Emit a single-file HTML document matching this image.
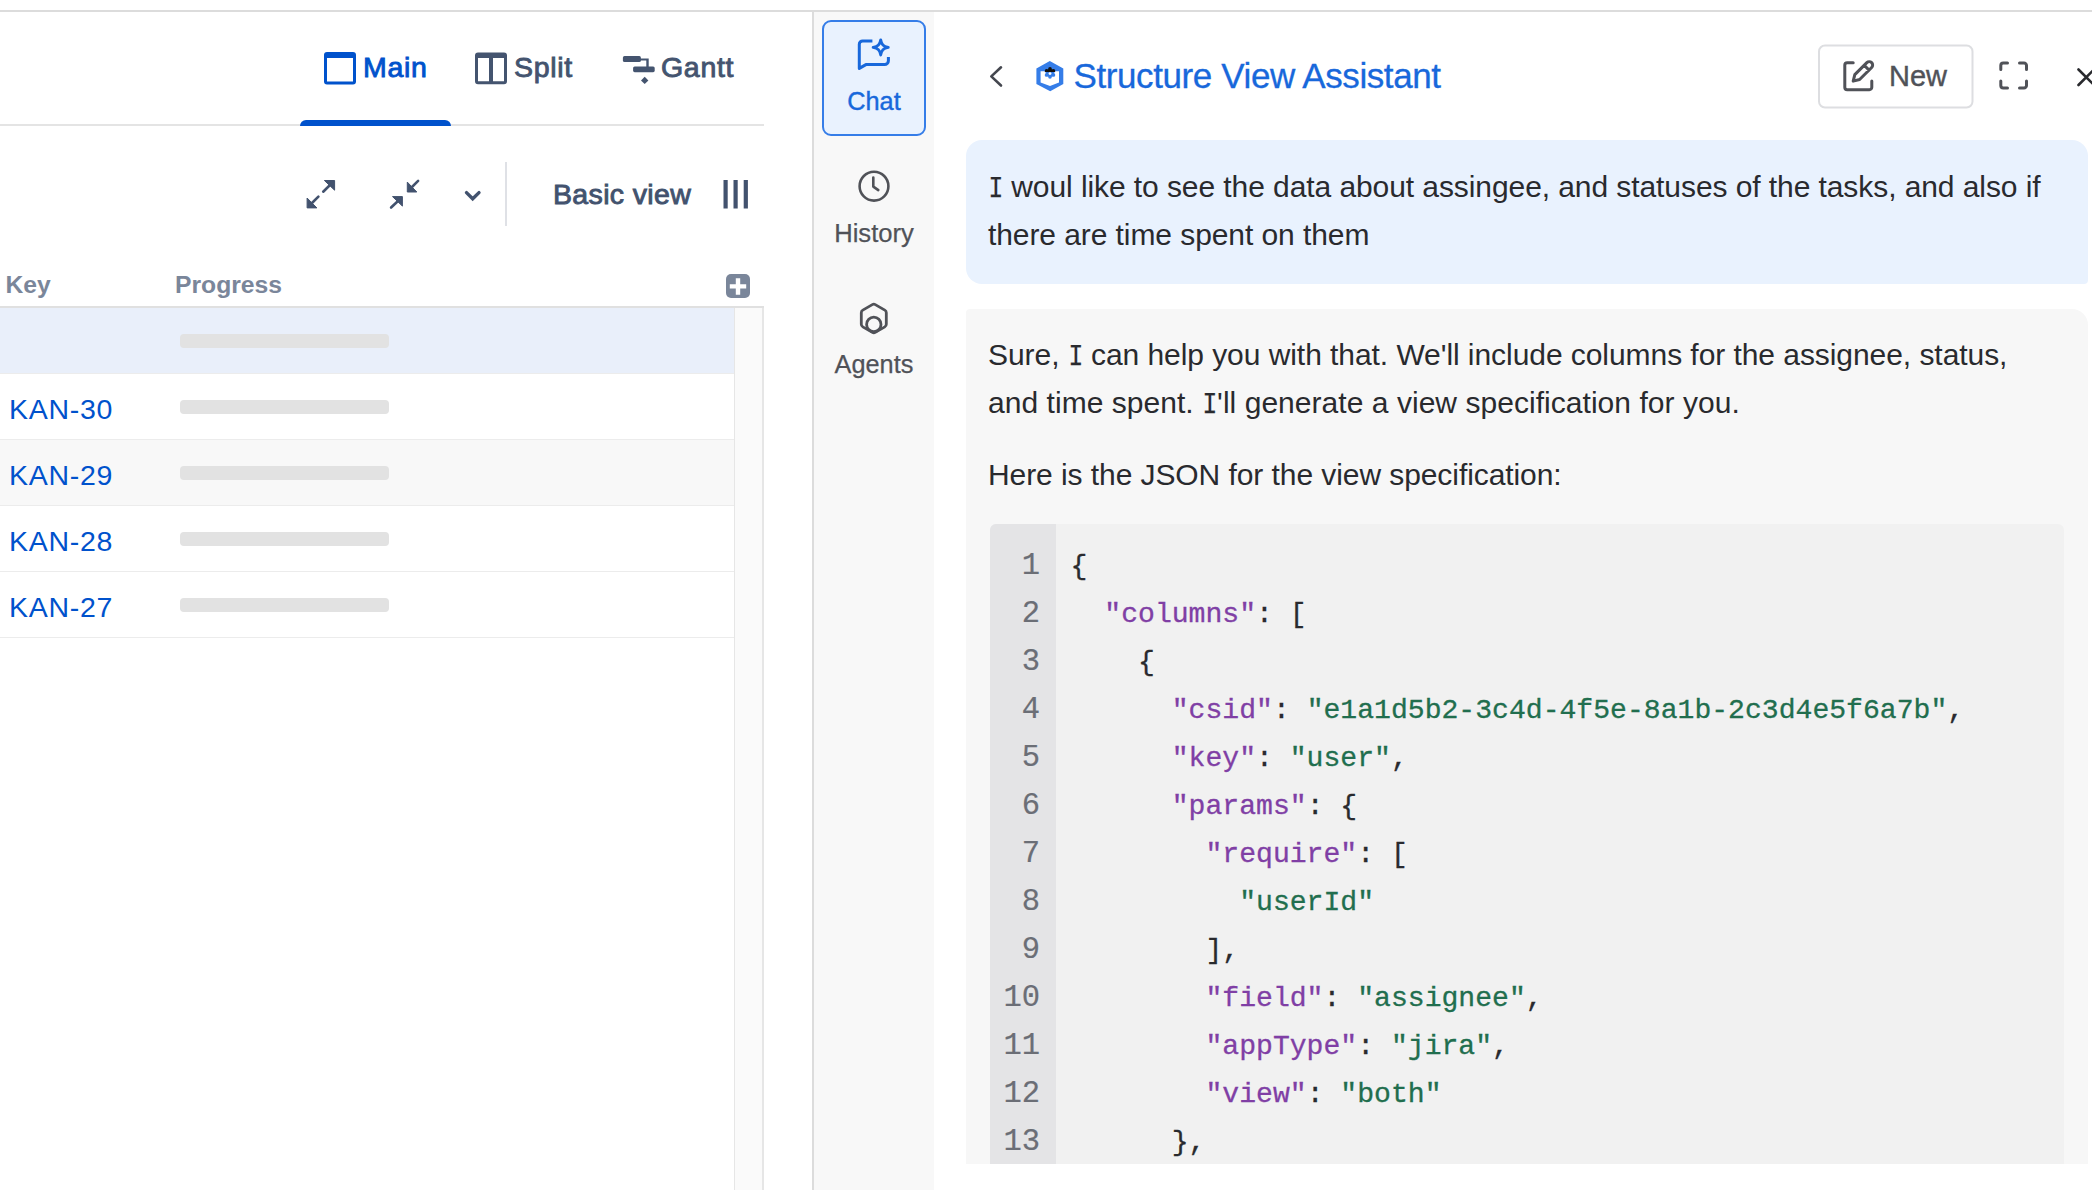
<!DOCTYPE html>
<html><head><meta charset="utf-8">
<style>
*{box-sizing:border-box;margin:0;padding:0}
html,body{width:2092px;height:1190px;overflow:hidden;background:#fff}
body{position:relative;font-family:"Liberation Sans",sans-serif;color:#292a2e}
.a{position:absolute;white-space:pre}
svg{position:absolute;overflow:visible}
.t28{font-size:28.5px;line-height:28px;letter-spacing:0.7px}
.k{color:#803fa5}.s{color:#216e4e}
.ct{font-size:30px;line-height:48px;color:#292a2e}
.I{display:inline-block;width:15px;letter-spacing:0}.I span{display:inline-block;-webkit-text-stroke:0.25px currentColor;font-family:"Liberation Mono",monospace;transform:translateX(0.6px) scaleX(0.82);transform-origin:0 0}
.med{-webkit-text-stroke:0.9px currentColor}
</style></head><body>
<!-- top border -->
<div class="a" style="left:0;top:10px;width:2092px;height:2px;background:#dcdcdc"></div>

<!-- ============ LEFT PANEL ============ -->
<!-- tabs -->
<svg style="left:0;top:0" width="800" height="130">
  <path fill="#0052cc" fill-rule="evenodd" d="M327 52h26a3 3 0 0 1 3 3v26.5a3 3 0 0 1-3 3h-26a3 3 0 0 1-3-3V55a3 3 0 0 1 3-3zM327 58v23.5h26V58z"/>
  <path fill="#44546f" fill-rule="evenodd" d="M478 52.4h26a3 3 0 0 1 3 3v25.8a3 3 0 0 1-3 3h-26a3 3 0 0 1-3-3V55.4a3 3 0 0 1 3-3zM478 58v23.2h11V58zM493 58v23.2h11V58z"/>
  <g fill="#44546f">
    <rect x="622.9" y="56.1" width="18" height="6" rx="1.6"/>
    <rect x="633.1" y="66.4" width="21.6" height="5.8" rx="1.6"/>
    <path d="M640 58.4h8.7v8.6h-2.4v-6.6H640z"/>
    <path d="M644.7 76.7l3.7 3.7-3.7 3.7-3.7-3.7z"/>
  </g>
  
</svg>
<div class="a t28 med" style="left:363px;top:53px;color:#0052cc">Main</div>
<div class="a t28 med" style="left:514px;top:53.3px;color:#44546f">Split</div>
<div class="a t28 med" style="left:661px;top:53.3px;color:#44546f">Gantt</div>
<div class="a" style="left:0;top:124px;width:764px;height:2px;background:#e4e4e4"></div>
<div class="a" style="left:300px;top:120px;width:151px;height:6px;border-radius:6px 6px 0 0;background:#0052cc"></div>

<!-- toolbar -->
<svg style="left:0;top:0" width="800" height="240">
  <g fill="#42526e" stroke="#42526e" stroke-linejoin="round">
    <path stroke-width="1" d="M324.4 180.5H334.6V190.2Z"/>
    <path stroke-width="1" d="M307.1 198V207.9H316.9Z"/>
    <path stroke-width="1" d="M407.3 182.1V192H416.8Z"/>
    <path stroke-width="1" d="M392.5 196.6H402.4V206.1Z"/>
  </g>
  <g stroke="#42526e" stroke-width="2.6" stroke-linecap="round" fill="none">
    <path d="M329 186L323.2 191.7"/>
    <path d="M312 203L318.4 196.6"/>
    <path d="M411.5 187.5L418.1 180.9"/>
    <path d="M397.5 201.5L391.1 207.5"/>
    <path stroke-width="3.4" d="M466.5 192.6L472.7 198.8L479 192.6"/>
  </g>
  <rect x="505" y="162" width="2" height="64" fill="#dfe1e6"/>
  <g fill="#42526e">
    <rect x="723.5" y="180" width="4.2" height="28.5"/>
    <rect x="733.5" y="180" width="4.2" height="28.5"/>
    <rect x="743.7" y="180" width="4.2" height="28.5"/>
  </g>
</svg>
<div class="a t28 med" style="left:553px;top:180px;color:#42526e;letter-spacing:0.35px">Basic view</div>

<!-- table header -->
<div class="a" style="left:5.5px;top:272.5px;font-size:24.7px;line-height:24px;font-weight:bold;color:#7a869a">Key</div>
<div class="a" style="left:175px;top:272.5px;font-size:24.7px;line-height:24px;font-weight:bold;color:#7a869a">Progress</div>
<svg style="left:0;top:0" width="800" height="320">
  <rect x="726" y="274" width="24" height="24" rx="5" fill="#7a869a"/>
  <path d="M738 278.2v16.5M729.8 286.4h16.4" stroke="#fff" stroke-width="4.4"/>
</svg>
<div class="a" style="left:0;top:306px;width:764px;height:2px;background:#e0e0e0"></div>

<!-- rows -->
<div class="a" style="left:0;top:308px;width:734px;height:65px;background:#e9effa"></div>
<div class="a" style="left:0;top:373px;width:734px;height:1px;background:#ececec"></div>
<div class="a" style="left:0;top:439px;width:734px;height:1px;background:#ececec"></div>
<div class="a" style="left:0;top:440px;width:734px;height:65px;background:#f8f8f8"></div>
<div class="a" style="left:0;top:505px;width:734px;height:1px;background:#ececec"></div>
<div class="a" style="left:0;top:571px;width:734px;height:1px;background:#ececec"></div>
<div class="a" style="left:0;top:637px;width:734px;height:1px;background:#ececec"></div>
<!-- progress bars -->
<div class="a" style="left:179.7px;top:334.2px;width:209px;height:14px;border-radius:4px;background:#e2e2e2"></div>
<div class="a" style="left:179.7px;top:400.2px;width:209px;height:14px;border-radius:4px;background:#e2e2e2"></div>
<div class="a" style="left:179.7px;top:466.2px;width:209px;height:14px;border-radius:4px;background:#e2e2e2"></div>
<div class="a" style="left:179.7px;top:532.2px;width:209px;height:14px;border-radius:4px;background:#e2e2e2"></div>
<div class="a" style="left:179.7px;top:598.2px;width:209px;height:14px;border-radius:4px;background:#e2e2e2"></div>
<div class="a t28" style="left:9px;top:395.3px;color:#0052cc">KAN-30</div>
<div class="a t28" style="left:9px;top:461.3px;color:#0052cc">KAN-29</div>
<div class="a t28" style="left:9px;top:527.3px;color:#0052cc">KAN-28</div>
<div class="a t28" style="left:9px;top:593.3px;color:#0052cc">KAN-27</div>
<!-- scroll column -->
<div class="a" style="left:734px;top:308px;width:30px;height:882px;background:#fafafa;border-left:1.5px solid #e6e6e6;border-right:2px solid #e6e6e6"></div>

<!-- ============ SIDEBAR ============ -->
<div class="a" style="left:812px;top:12px;width:2px;height:1178px;background:#dcdcdc"></div>
<div class="a" style="left:814px;top:12px;width:120px;height:1178px;background:#f8f8f8"></div>
<div class="a" style="left:822px;top:20px;width:104px;height:116px;border:2px solid #357de8;border-radius:9px;background:#e9f2fe"></div>

<!-- ============ CHAT PANEL ============ -->
<!-- sidebar icons -->
<svg style="left:0;top:0" width="940" height="400">
  <g fill="none" stroke="#1868db" stroke-width="3" stroke-linecap="round" stroke-linejoin="round">
    <path stroke-linecap="butt" d="M872.4 40.9H862.6a3.3 3.3 0 0 0-3.3 3.3V68.4L865.9 64.6H884.6a3.8 3.8 0 0 0 3.8-3.8V56.9"/>
    <path stroke-width="2.8" d="M880.7 39.8C881.6 44.6 883.2 46.4 888.3 47.4C883.2 48.4 881.6 50.2 880.7 55C879.8 50.2 878.2 48.4 873.1 47.4C878.2 46.4 879.8 44.6 880.7 39.8Z"/>
  </g>
  <g fill="none" stroke="#505258" stroke-width="2.6" stroke-linecap="round" stroke-linejoin="round">
    <circle cx="874" cy="186.2" r="14.4"/>
    <path d="M873.3 177.6V186.6L878.3 190.1"/>
    <path stroke-width="2.8" d="M872.3 304.6a3 3 0 0 1 3 0L884.8 310.1a3 3 0 0 1 1.5 2.6V324.3a3 3 0 0 1-1.5 2.6L875.3 332.4a3 3 0 0 1-3 0L862.8 326.9a3 3 0 0 1-1.5-2.6V312.7a3 3 0 0 1 1.5-2.6Z"/>
    <circle stroke-width="2.8" cx="873.8" cy="324.4" r="7.2"/>
  </g>
</svg>
<div class="a" style="left:814px;top:85.8px;width:120px;text-align:center;-webkit-text-stroke:0.4px currentColor;font-size:25.3px;line-height:30px;color:#1868db">Chat</div>
<div class="a" style="left:814px;top:218px;width:120px;text-align:center;-webkit-text-stroke:0.25px currentColor;font-size:25.6px;line-height:30px;color:#505258">History</div>
<div class="a" style="left:814px;top:349px;width:120px;text-align:center;-webkit-text-stroke:0.25px currentColor;font-size:25.3px;line-height:30px;color:#505258">Agents</div>

<!-- header -->
<svg style="left:0;top:0" width="2092" height="120">
  <path d="M1001 67.3L991.3 76.4L1001 85.5" fill="none" stroke="#44474f" stroke-width="2.6" stroke-linecap="round" stroke-linejoin="round"/>
  <path fill="#357de8" d="M1049.8 61L1063.3 68.4V83.9L1050.2 91.3L1036.4 83.9V68.4Z"/>
  <path fill="#fff" d="M1040.6 71.2H1059V82.6L1050 86L1040.6 82.6Z"/>
  <defs><clipPath id="gtop"><rect x="1030" y="55" width="40" height="17"/></clipPath><clipPath id="gbot"><rect x="1030" y="72" width="40" height="30"/></clipPath></defs>
  <g fill="#111" clip-path="url(#gtop)"><circle cx="1050" cy="72.9" r="3.9"/><circle cx="1050.00" cy="68.95" r="1.85"/><circle cx="1046.58" cy="70.93" r="1.85"/><circle cx="1046.58" cy="74.88" r="1.85"/><circle cx="1050.00" cy="76.85" r="1.85"/><circle cx="1053.42" cy="74.88" r="1.85"/><circle cx="1053.42" cy="70.93" r="1.85"/></g>
  <g fill="#357de8" clip-path="url(#gbot)"><circle cx="1050" cy="72.9" r="3.9"/><circle cx="1050.00" cy="68.95" r="1.85"/><circle cx="1046.58" cy="70.93" r="1.85"/><circle cx="1046.58" cy="74.88" r="1.85"/><circle cx="1050.00" cy="76.85" r="1.85"/><circle cx="1053.42" cy="74.88" r="1.85"/><circle cx="1053.42" cy="70.93" r="1.85"/></g>
  <circle cx="1050" cy="73.6" r="1.4" fill="#fff"/>
  <rect x="1819" y="45.5" width="153.5" height="62" rx="6" fill="#fff" stroke="#dddee1" stroke-width="2"/>
  <g fill="none" stroke="#505258" stroke-width="3" stroke-linecap="round" stroke-linejoin="round">
    <path d="M1853.2 62.7H1847.2a2.4 2.4 0 0 0-2.4 2.4V87.3a2.4 2.4 0 0 0 2.4 2.4H1869.4a2.4 2.4 0 0 0 2.4-2.4V81"/>
    <path transform="translate(1870.3 64) rotate(45)" d="M-3.4 18.5V1.5A3.4 3.4 0 0 1 3.4 1.5V18.5L0 24.2ZM-3.4 5.2H3.4"/>
    <path d="M2000.8 69.5V65.5a2.5 2.5 0 0 1 2.5-2.5H2007.5M2019.5 63H2024a2.5 2.5 0 0 1 2.5 2.5V69.5M2026.5 81V85.5a2.5 2.5 0 0 1-2.5 2.5H2019.5M2007.5 88H2003.3a2.5 2.5 0 0 1-2.5-2.5V81"/>
  </g>
  <path d="M2078.5 69.5L2094 85M2078.5 85L2094 69.5" stroke="#292a2e" stroke-width="2.6" stroke-linecap="round"/>
</svg>
<div class="a" style="left:1073.5px;top:58.5px;font-size:35px;line-height:34px;letter-spacing:-0.4px;-webkit-text-stroke:0.3px currentColor;color:#1868db">Structure View Assistant</div>
<div class="a" style="left:1889px;top:62px;font-size:29px;line-height:28px;color:#505258;-webkit-text-stroke:0.4px currentColor">New</div>

<!-- user bubble -->
<div class="a" style="left:966px;top:140px;width:1122px;height:144px;background:#e9f2fe;border-radius:16px 16px 4px 16px"></div>
<div class="a ct" style="left:988px;top:163.2px;letter-spacing:-0.08px"><span class="I"><span>I</span></span> woul like to see the data about assingee, and statuses of the tasks, and also if</div>
<div class="a ct" style="left:988px;top:211.2px;letter-spacing:-0.08px">there are time spent on them</div>

<!-- assistant bubble (clipped) -->
<div class="a" style="left:966px;top:308.5px;width:1122px;height:855.5px;overflow:hidden">
  <div style="position:absolute;left:0;top:0;width:1122px;height:1400px;background:#f7f7f7;border-radius:4px 16px 16px 16px"></div>
</div>
<div class="a ct" style="left:988px;top:330.8px;letter-spacing:-0.06px">Sure, <span class="I"><span>I</span></span> can help you with that. We'll include columns for the assignee, status,</div>
<div class="a ct" style="left:988px;top:378.8px;letter-spacing:0.04px">and time spent. <span class="I"><span>I</span></span>'ll generate a view specification for you.</div>
<div class="a ct" style="left:988px;top:451px;letter-spacing:-0.075px">Here is the JSON for the view specification:</div>

<!-- code block -->
<div class="a" style="left:990px;top:524px;width:1074px;height:640px;overflow:hidden;border-radius:6px 6px 0 0;background:#f1f1f1">
  <div style="position:absolute;left:0;top:0;width:65.5px;height:700px;background:#e4e4e6"></div>
</div>
<div class="a" id="ln" style="left:990px;top:542.1px;width:50px;text-align:right;-webkit-text-stroke:0.2px currentColor;font-family:'Liberation Mono',monospace;font-size:30.5px;line-height:48px;color:#6b6e76">1
2
3
4
5
6
7
8
9
10
11
12
13</div>
<div class="a" id="code" style="left:1070.6px;top:542.8px;-webkit-text-stroke:0.3px currentColor;font-family:'Liberation Mono',monospace;font-size:28.1px;line-height:48px;color:#292a2e">{
  <span class="k">"columns"</span>: [
    {
      <span class="k">"csid"</span>: <span class="s">"e1a1d5b2-3c4d-4f5e-8a1b-2c3d4e5f6a7b"</span>,
      <span class="k">"key"</span>: <span class="s">"user"</span>,
      <span class="k">"params"</span>: {
        <span class="k">"require"</span>: [
          <span class="s">"userId"</span>
        ],
        <span class="k">"field"</span>: <span class="s">"assignee"</span>,
        <span class="k">"appType"</span>: <span class="s">"jira"</span>,
        <span class="k">"view"</span>: <span class="s">"both"</span>
      },</div>

</body></html>
